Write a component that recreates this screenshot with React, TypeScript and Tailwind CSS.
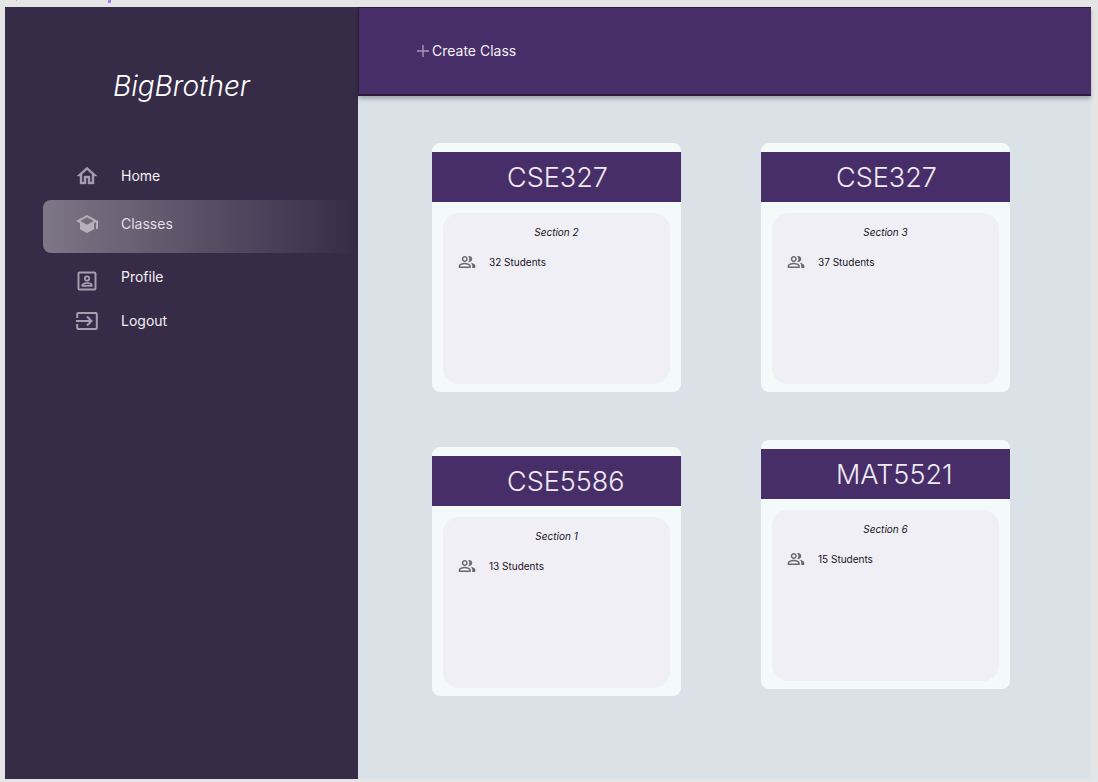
import type { ReactNode } from "react";
import { MdOutlinePeopleAlt } from "react-icons/md";

function HomeIcon() {
  return (
    <svg
      viewBox="0 0 24 24"
      className="size-6 fill-current stroke-current"
      strokeWidth="0.4"
      aria-hidden="true"
    >
      <path d="m12 5.69 5 4.5V18h-2v-6H9v6H7v-7.81l5-4.5M12 3 2 12h3v8h6v-6h2v6h6v-8h3L12 3z" />
    </svg>
  );
}

function SchoolIcon() {
  return (
    <svg viewBox="0 0 24 24" className="size-6 fill-current" aria-hidden="true">
      <path
        fillRule="evenodd"
        d="M12 3 1 9l4 2.18v6L12 21l7-3.82v-6l2-1.09V17h2V9L12 3zm6.82 6L12 12.72 5.18 9 12 5.28 18.82 9z"
      />
    </svg>
  );
}

function ProfileIcon() {
  return (
    <svg
      viewBox="0 0 24 24"
      className="size-6 fill-none stroke-current"
      strokeWidth="1.9"
      aria-hidden="true"
    >
      <rect x="3.5" y="3.5" width="17" height="17" rx="1" />
      <circle cx="12" cy="9.5" r="2.2" strokeWidth="1.8" />
      <path
        d="M7.2 16.8v-.5c0-1.2 2.4-2.1 4.8-2.1s4.8.9 4.8 2.1v.5z"
        strokeWidth="1.7"
        strokeLinejoin="round"
      />
    </svg>
  );
}

function LogoutIcon() {
  return (
    <svg
      viewBox="0 0 24 24"
      className="size-6 fill-none stroke-current"
      strokeWidth="2"
      aria-hidden="true"
    >
      <path d="M2.2 9V5a1 1 0 0 1 1-1h17.6a1 1 0 0 1 1 1v14a1 1 0 0 1-1 1H3.2a1 1 0 0 1-1-1v-4" />
      <path d="M1 12h15M12 7.5l4.5 4.5-4.5 4.5" />
    </svg>
  );
}

function NavItem({
  icon,
  label,
  className,
  active = false,
}: {
  icon: ReactNode;
  label: string;
  className: string;
  active?: boolean;
}) {
  return (
    <li>
      <a
        href="#"
        aria-current={active ? "page" : undefined}
        className={`flex items-center gap-[22px] pl-8 text-sm ${className}`}
      >
        <span className={active ? "text-[#b5b0b9]" : "text-[#a59fae]"}>{icon}</span>
        <span>{label}</span>
      </a>
    </li>
  );
}

type ClassInfo = { code: string; section: number; students: number };

function ClassCard({ code, section, students }: ClassInfo) {
  return (
    <article className="flex h-[249px] flex-col rounded-lg bg-[#f4f9fa] pt-[9px] pb-2">
      <h2 className="flex h-[50px] shrink-0 items-center bg-[#472e69] pt-0.5 pl-[75px] text-[27px] font-light text-[#efeaf2]">
        {code}
      </h2>
      <div className="mx-[11px] mt-[11px] flex-1 rounded-2xl bg-[#f1eff6] pt-[11px] text-[10px] leading-4 text-[#16131c]">
        <p className="text-center italic">Section {section}</p>
        <p className="mt-[13px] flex items-center gap-[13px] pl-[15px]">
          <MdOutlinePeopleAlt className="size-[18px] text-[#6b6870]" aria-hidden="true" />
          <span>{students} Students</span>
        </p>
      </div>
    </article>
  );
}

const leftColumn: ClassInfo[] = [
  { code: "CSE327", section: 2, students: 32 },
  { code: "CSE5586", section: 1, students: 13 },
];

const rightColumn: ClassInfo[] = [
  { code: "CSE327", section: 3, students: 37 },
  { code: "MAT5521", section: 6, students: 15 },
];

export default function App() {
  return (
    <div className="flex min-h-screen flex-col bg-[#e5e5e5] pr-[7px] pb-[3px] pl-[5px] font-['Inter','Liberation_Sans',sans-serif]">
      <div className="flex h-[7px] shrink-0 items-start gap-[91px] pl-[11px]" aria-hidden="true">
        <span className="size-px bg-[#b9aaf8]" />
        <span className="h-[3px] w-[3px] bg-[#9b80fb]" />
      </div>

      <div className="flex flex-1">
        <aside className="w-[353px] shrink-0 bg-[#372c47] text-[#f3f1f5]">
          <h1 className="pt-[58px] pl-[108px] text-[28px] leading-[42px] font-light text-white italic">
            BigBrother
          </h1>
          <nav className="mt-[45px] pl-[38px]" aria-label="Main">
            <ul>
              <NavItem className="h-12" label="Home" icon={<HomeIcon />} />
              <NavItem
                active
                className="h-[53px] rounded-l-lg bg-linear-to-r from-[#7e7786] to-[#372c47] pb-[5px] text-[#e3dfe6]"
                label="Classes"
                icon={<SchoolIcon />}
              />
              <NavItem
                className="h-12"
                label="Profile"
                icon={
                  <span className="block pt-2">
                    <ProfileIcon />
                  </span>
                }
              />
              <NavItem className="h-10" label="Logout" icon={<LogoutIcon />} />
            </ul>
          </nav>
        </aside>

        <div className="flex flex-1 flex-col bg-[#dae2e8]">
          <header className="flex h-[89px] items-center border border-r-0 border-b-2 border-[#2b1d40] bg-[#472e69] pl-[57px] shadow-[0_3px_4px_rgba(0,0,0,0.25)]">
            <button type="button" className="flex items-center gap-0.5 text-sm text-[#f3f1f5]">
              <svg
                viewBox="0 0 14 14"
                className="size-[14px] stroke-[#a698b8]"
                aria-hidden="true"
              >
                <path d="M7 1v12M1 7h12" strokeWidth="1.4" />
              </svg>
              Create Class
            </button>
          </header>

          <main className="grid grid-cols-2 gap-20 pt-[47px] pr-[81px] pb-12 pl-[74px]">
            <div className="flex flex-col gap-[55px]">
              {leftColumn.map((item) => (
                <ClassCard key={item.code} {...item} />
              ))}
            </div>
            <div className="flex flex-col gap-12">
              {rightColumn.map((item) => (
                <ClassCard key={item.code} {...item} />
              ))}
            </div>
          </main>
        </div>
      </div>
    </div>
  );
}
